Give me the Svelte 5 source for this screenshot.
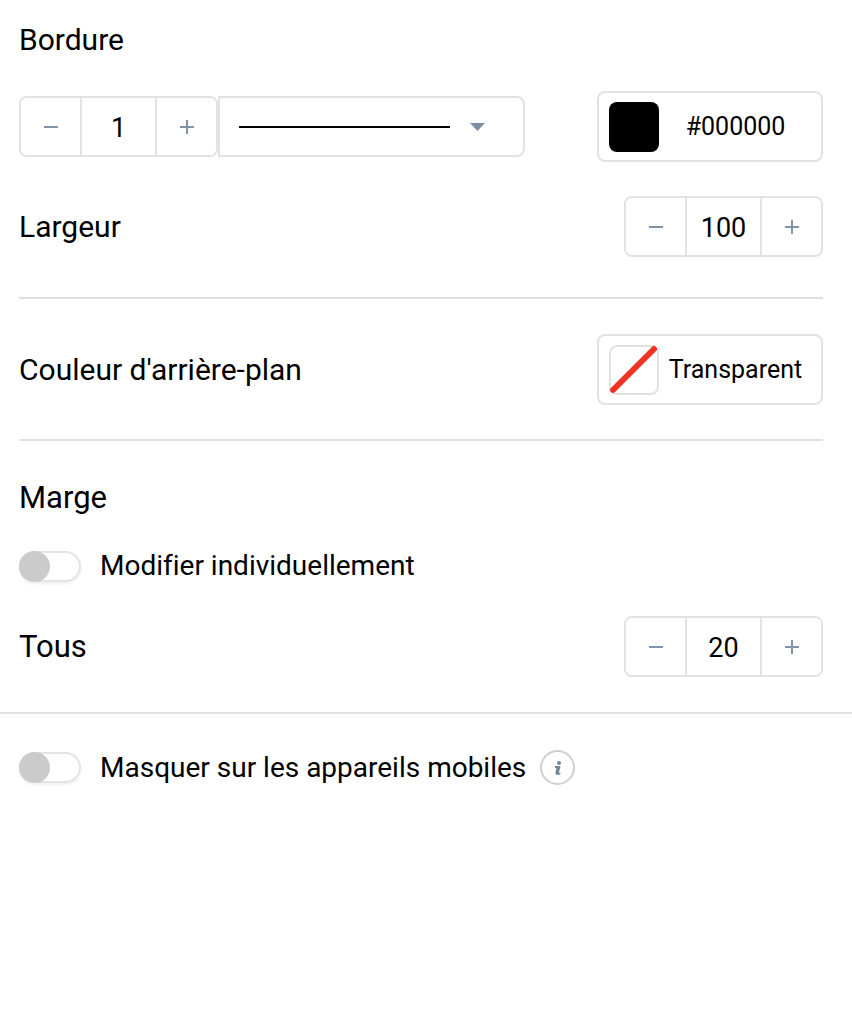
<script lang="ts">
let borderSize = $state(1);
let borderStyle = $state('solid');
let borderColor = $state('#000000');
let width = $state(100);
let margin = $state(20);
let individual = $state(false);
let hideOnMobile = $state(false);
</script>

{#snippet stepper(id: string, value: number, update: (n: number) => void)}
    <div class="stepper">
        <button type="button" aria-label="Diminuer" onclick={() => update(value - 1)}>
            <svg width="14" height="14" viewBox="0 0 14 14"><path d="M0 7h14" /></svg>
        </button>
        <input {id} type="text" inputmode="numeric" {value} onchange={(e) => update(Number(e.currentTarget.value))} />
        <button type="button" aria-label="Augmenter" onclick={() => update(value + 1)}>
            <svg width="14" height="14" viewBox="0 0 14 14"><path d="M0 7h14M7 0v14" /></svg>
        </button>
    </div>
{/snippet}

<main class="panel">
    <section class="group">
        <label class="title small border-title" for="border-size">Bordure</label>
        <div class="row border-row">
            <div class="joined">
                {@render stepper('border-size', borderSize, (n) => (borderSize = n))}
                <div class="line-select">
                    <span class="line" style="border-top-style: {borderStyle}"></span>
                    <svg class="caret" width="15" height="8" viewBox="0 0 15 8"><path d="M0 0h15L7.5 8z" /></svg>
                    <select aria-label="Style de bordure" bind:value={borderStyle}>
                        <option value="solid">Continue</option>
                        <option value="dashed">Tirets</option>
                        <option value="dotted">Pointillés</option>
                    </select>
                </div>
            </div>
            <button type="button" class="color">
                <span class="swatch" style="background: {borderColor}"></span>
                <span class="value">{borderColor}</span>
            </button>
        </div>
        <div class="row">
            <label class="title small" for="width">Largeur</label>
            {@render stepper('width', width, (n) => (width = n))}
        </div>
    </section>

    <section class="group background">
        <div class="row">
            <span class="title small" id="background-label">Couleur d'arrière-plan</span>
            <button type="button" class="color" aria-describedby="background-label">
                <span class="swatch empty">
                    <svg width="50" height="50" viewBox="0 0 50 50"><path d="M4 45L45 4" /></svg>
                </span>
                <span class="value">Transparent</span>
            </button>
        </div>
    </section>

    <section class="group margins">
        <h2 class="title">Marge</h2>
        <label class="switch">
            <input type="checkbox" bind:checked={individual} />
            <span>Modifier individuellement</span>
        </label>
        <div class="row">
            <label class="title" for="margin">Tous</label>
            {@render stepper('margin', margin, (n) => (margin = n))}
        </div>
    </section>

    <section class="mobile">
        <label class="switch">
            <input type="checkbox" bind:checked={hideOnMobile} />
            <span>Masquer sur les appareils mobiles</span>
        </label>
        <button type="button" class="info" aria-label="Informations">
            <svg width="10" height="16" viewBox="0 0 10 16">
                <circle cx="6" cy="3" r="2" />
                <path d="M2 6h5.500L6 12.500q0 .8 1.500.3v1.200C5 15.500 2 15 2.500 12.500L3.400 8H2z" />
            </svg>
        </button>
    </section>
</main>

<style>
:global(body) {
    background: #fff;
}

.panel {
    font-family: Roboto, "Liberation Sans", sans-serif;
    font-size: 27px;
    font-variant-ligatures: none;
    line-height: 32px;
    color: #000;
}

button,
input,
select {
    box-sizing: border-box;
    margin: 0;
    padding: 0;
    border: 0;
    background: #fff;
    font: inherit;
    color: inherit;
}

button,
select {
    cursor: pointer;
}

.group {
    margin: 0 29px 0 19px;
    border-bottom: 2px solid #e0e0e0;
    padding: 24px 0 40px;
}

.group.background {
    padding: 35px 0 34px;
}

.group.margins {
    margin: 0;
    padding: 41px 29px 35px 19px;
}

.title {
    margin: 0;
    font-size: 31px;
    font-weight: 400;
}

.title.small {
    font-size: 30px;
}

.border-title {
    display: block;
}

.row {
    display: flex;
    align-items: center;
    justify-content: space-between;
}

.border-row {
    margin: 35px 0 34px;
}

.joined {
    display: flex;
}

.stepper {
    box-sizing: border-box;
    display: flex;
    height: 61px;
    border: 2px solid #e2e2e2;
    border-radius: 8px;
    overflow: hidden;
}

.stepper button {
    display: flex;
    align-items: center;
    justify-content: center;
    width: 59px;
}

.stepper path {
    fill: none;
    stroke: #8193a7;
    stroke-width: 2;
}

.stepper input {
    width: 77px;
    border: solid #e2e2e2;
    border-width: 0 2px;
    padding-top: 2px;
    text-align: center;
}

.line-select {
    position: relative;
    box-sizing: border-box;
    display: flex;
    align-items: center;
    gap: 20px;
    width: 307px;
    border: 2px solid #e2e2e2;
    border-radius: 0 8px 8px 0;
    padding: 0 38px 0 19px;
}

.line {
    flex: 1;
    border-top: 2px solid #000;
}

.caret {
    fill: #7b8fa1;
}

/* the native control covers the drawn line and caret */
.line-select select {
    position: absolute;
    inset: 0;
    width: 100%;
    height: 100%;
    opacity: 0;
}

.color {
    display: flex;
    align-items: center;
    width: 226px;
    height: 71px;
    border: 2px solid #e2e2e2;
    border-radius: 8px;
    padding: 0 9px 0 10px;
    font-size: 25px;
}

.swatch {
    box-sizing: border-box;
    display: flex;
    align-items: center;
    justify-content: center;
    width: 50px;
    height: 50px;
    border-radius: 8px;
}

.swatch.empty {
    border: 2px solid #e2e2e2;
}

.swatch svg {
    flex: none;
}

.swatch path {
    stroke: #ee3524;
    stroke-width: 6;
    stroke-linecap: round;
}

.value {
    flex: 1;
    text-align: center;
}

.switch {
    display: flex;
    align-items: center;
    gap: 19px;
    font-size: 28px;
    cursor: pointer;
}

.margins .switch {
    margin: 36px 0 34px;
}

.switch input {
    appearance: none;
    display: flex;
    width: 62px;
    height: 31px;
    border-radius: 16px;
    box-shadow: inset 0 0 0 2px #e4e4e4, 0 2px 3px rgba(0, 0, 0, 0.06);
    cursor: pointer;
}

.switch input::before {
    content: '';
    width: 31px;
    height: 31px;
    border-radius: 50%;
    background: #cbcbcb;
}

.switch input:checked {
    justify-content: flex-end;
}

.mobile {
    display: flex;
    align-items: center;
    gap: 14px;
    padding: 36px 29px 36px 19px;
}

.info {
    display: flex;
    align-items: center;
    justify-content: center;
    width: 35px;
    height: 35px;
    border: 2px solid #d0d0d0;
    border-radius: 50%;
}

.info svg {
    fill: #71879c;
}
</style>
